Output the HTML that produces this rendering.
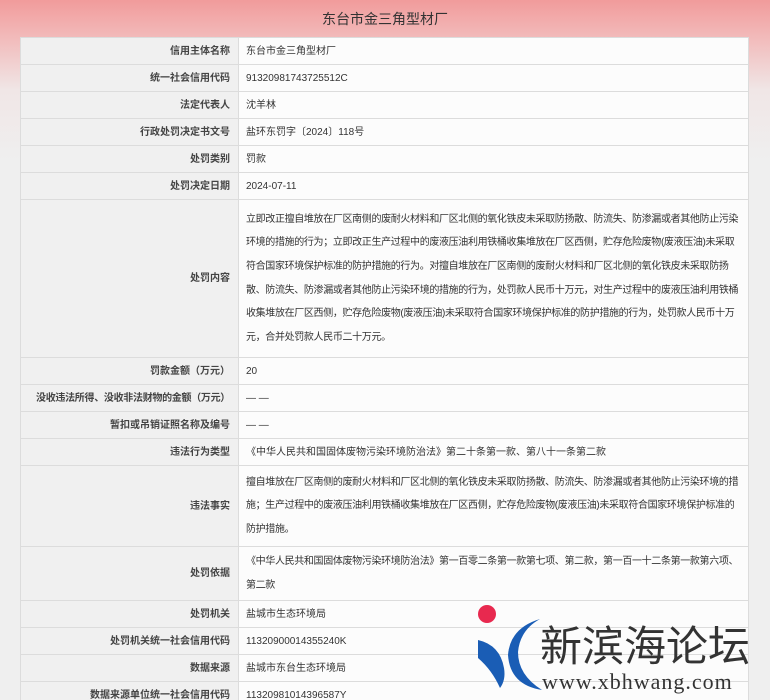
<!DOCTYPE html>
<html style="background:#efefef"><head><meta charset="utf-8"><style>
html,body{margin:0;width:770px;height:700px;overflow:hidden}
body{background:linear-gradient(#f19b9b 0px,#f2b4b4 30px,#f0e6e6 90px,#efefef 160px,#efefef 700px) no-repeat;font-family:"Liberation Sans","Noto Sans CJK SC",sans-serif;font-size:10px;color:#333;position:relative}
h1{margin:0;position:absolute;top:9px;left:0;width:770px;text-align:center;font-weight:normal;font-size:14px;color:#333}
table{position:absolute;top:37px;left:20px;width:729px;border-collapse:collapse;table-layout:fixed;background:#fafafa}
td{border:1px solid #dcdcdc;padding:0 7px;height:26px;line-height:25px;white-space:nowrap;overflow:hidden}
td.l{text-align:right;background:#f0f0f0;font-weight:bold;color:#444;padding-right:8px}
td.v{background:#fcfcfc;padding-left:7px}
td.m{line-height:23.6px;letter-spacing:-0.35px}
.logo{position:absolute;left:470px;top:600px}
</style></head><body>
<h1>东台市金三角型材厂</h1>
<table>
<colgroup><col style="width:218px"><col></colgroup>
<tr><td class="l">信用主体名称</td><td class="v">东台市金三角型材厂</td></tr>
<tr><td class="l">统一社会信用代码</td><td class="v">91320981743725512C</td></tr>
<tr><td class="l">法定代表人</td><td class="v">沈羊林</td></tr>
<tr><td class="l">行政处罚决定书文号</td><td class="v">盐环东罚字〔2024〕118号</td></tr>
<tr><td class="l">处罚类别</td><td class="v">罚款</td></tr>
<tr><td class="l">处罚决定日期</td><td class="v">2024-07-11</td></tr>
<tr><td class="l" style="height:157px">处罚内容</td><td class="v m">立即改正擅自堆放在厂区南侧的废耐火材料和厂区北侧的氧化铁皮未采取防扬散、防流失、防渗漏或者其他防止污染<br>环境的措施的行为；立即改正生产过程中的废液压油利用铁桶收集堆放在厂区西侧，贮存危险废物(废液压油)未采取<br>符合国家环境保护标准的防护措施的行为。对擅自堆放在厂区南侧的废耐火材料和厂区北侧的氧化铁皮未采取防扬<br>散、防流失、防渗漏或者其他防止污染环境的措施的行为，处罚款人民币十万元，对生产过程中的废液压油利用铁桶<br>收集堆放在厂区西侧，贮存危险废物(废液压油)未采取符合国家环境保护标准的防护措施的行为，处罚款人民币十万<br>元，合并处罚款人民币二十万元。</td></tr>
<tr><td class="l">罚款金额（万元）</td><td class="v">20</td></tr>
<tr><td class="l" style="letter-spacing:-0.3px">没收违法所得、没收非法财物的金额（万元）</td><td class="v">— —</td></tr>
<tr><td class="l">暂扣或吊销证照名称及编号</td><td class="v">— —</td></tr>
<tr><td class="l">违法行为类型</td><td class="v">《中华人民共和国固体废物污染环境防治法》第二十条第一款、第八十一条第二款</td></tr>
<tr><td class="l" style="height:80px">违法事实</td><td class="v m">擅自堆放在厂区南侧的废耐火材料和厂区北侧的氧化铁皮未采取防扬散、防流失、防渗漏或者其他防止污染环境的措<br>施；生产过程中的废液压油利用铁桶收集堆放在厂区西侧，贮存危险废物(废液压油)未采取符合国家环境保护标准的<br>防护措施。</td></tr>
<tr><td class="l" style="height:53px">处罚依据</td><td class="v m">《中华人民共和国固体废物污染环境防治法》第一百零二条第一款第七项、第二款，第一百一十二条第一款第六项、<br>第二款</td></tr>
<tr><td class="l">处罚机关</td><td class="v">盐城市生态环境局</td></tr>
<tr><td class="l">处罚机关统一社会信用代码</td><td class="v">11320900014355240K</td></tr>
<tr><td class="l">数据来源</td><td class="v">盐城市东台生态环境局</td></tr>
<tr><td class="l">数据来源单位统一社会信用代码</td><td class="v">11320981014396587Y</td></tr>
</table>
<div class="logo">
<svg width="300" height="102" viewBox="0 0 300 102">
<circle cx="17" cy="14" r="9" fill="#e8294f"/>
<path d="M8 40 Q30 45 34 68 Q36 80 30 88 Q22 70 8 58 Z" fill="#1a5db5"/>
<path d="M70 19 Q50 30 48 52 Q48 75 72 90 Q40 85 38 55 Q40 28 70 19 Z" fill="#1a5db5"/>
<text x="70" y="61" font-family="'Noto Sans CJK SC',sans-serif" font-size="42" fill="#333">新滨海论坛</text>
<text x="72" y="89" font-family="'Liberation Serif',serif" font-size="22" fill="#333" letter-spacing="1">www.xbhwang.com</text>
</svg>
</div>
</body></html>
